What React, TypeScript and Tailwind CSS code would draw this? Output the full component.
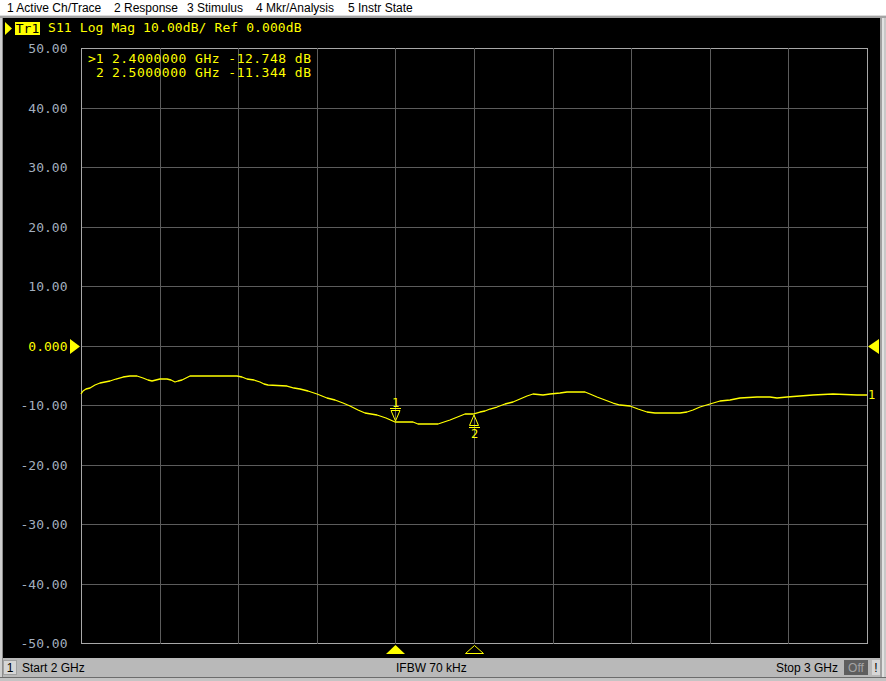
const MENU = [
  { label: "1 Active Ch/Trace", w: "w-[107px]" },
  { label: "2 Response", w: "w-[73px]" },
  { label: "3 Stimulus", w: "w-[69px]" },
  { label: "4 Mkr/Analysis", w: "w-[92px]" },
  { label: "5 Instr State", w: "w-auto" },
];

const Y_LABELS = ["50.00", "40.00", "30.00", "20.00", "10.00", "0.000", "-10.00", "-20.00", "-30.00", "-40.00", "-50.00"];

const TRACE: [number, number][] = [
  [81, 394], [83, 391], [86, 389], [90, 388], [95, 385], [100, 383], [105, 382], [110, 381],
  [116, 379], [123, 377], [130, 376], [137, 376], [140, 377], [143, 378], [148, 380], [152, 381],
  [156, 380], [160, 379], [167, 379], [171, 380], [175, 382], [178, 381], [182, 380], [186, 378],
  [190, 376], [237, 376], [242, 377], [247, 379], [254, 380], [260, 382], [264, 384], [268, 385],
  [287, 386], [294, 388], [300, 389], [308, 391], [317, 394], [322, 396], [327, 398], [335, 400],
  [343, 403], [350, 406], [358, 410], [365, 413], [377, 415], [386, 418], [395, 422], [405, 422],
  [413, 422], [418, 424], [438, 424], [444, 422], [450, 420], [455, 418], [460, 416], [465, 414],
  [473, 414], [480, 412], [485, 411], [490, 409], [497, 407], [505, 404], [513, 402], [520, 399],
  [527, 396], [533, 394], [543, 395], [550, 394], [560, 393], [567, 392], [585, 392], [590, 394],
  [597, 397], [605, 400], [613, 403], [620, 405], [630, 406], [638, 409], [647, 412], [655, 413],
  [680, 413], [687, 412], [693, 410], [700, 407], [710, 404], [720, 401], [730, 400], [740, 398],
  [757, 397], [770, 397], [777, 398], [787, 397], [800, 396], [813, 395], [833, 394], [857, 395],
  [867, 395],
];

const READOUT = [
  { idx: ">1", ix: 88, text: "2.4000000 GHz -12.748 dB", y: 63 },
  { idx: "2", ix: 96, text: "2.5000000 GHz -11.344 dB", y: 77 },
];

const MONO = "'DejaVu Sans Mono', 'Liberation Mono', monospace";
const YEL = "#ffff00";

// grid geometry in page pixels
const X0 = 81;
const X1 = 867;
const Y0 = 48;
const Y1 = 643;
const hLines = Array.from({ length: 11 }, (_, i) => Math.round(Y0 + i * 59.5) + 0.5);
const vLines = Array.from({ length: 11 }, (_, i) => Math.round(X0 + i * 78.6) + 0.5);

function Chart() {
  return (
    <svg width={877} height={620} viewBox="3 38 877 620" className="block" style={{ fontFamily: MONO }}>
      {hLines.map((y, i) => (
        <line
          key={"h" + i}
          x1={X0}
          x2={X1 + 1}
          y1={y}
          y2={y}
          stroke={i === 0 || i === 10 ? "#a8a8a8" : "#5c5c5c"}
          shapeRendering="crispEdges"
        />
      ))}
      {vLines.map((x, i) => (
        <line
          key={"v" + i}
          x1={x}
          x2={x}
          y1={Y0}
          y2={Y1 + 1}
          stroke={i === 0 || i === 10 ? "#a8a8a8" : "#5c5c5c"}
          shapeRendering="crispEdges"
        />
      ))}

      {Y_LABELS.map((l, i) => (
        <text
          key={l}
          x={67.5}
          y={hLines[i] + 4.5}
          textAnchor="end"
          fontSize={13}
          fill={l === "0.000" ? YEL : "#a3afbf"}
        >
          {l}
        </text>
      ))}

      {/* reference level arrows */}
      <polygon points="70,339 70,354 80,346.5" fill={YEL} />
      <polygon points="879,339 879,354 868,346.5" fill={YEL} />

      <polyline
        points={TRACE.map((p) => p.join(",")).join(" ")}
        fill="none"
        stroke={YEL}
        strokeWidth={1.3}
        strokeLinejoin="round"
      />

      {/* marker 1 */}
      <text x={395.5} y={407} textAnchor="middle" fontSize={12} fill={YEL}>1</text>
      <line x1={390} x2={401} y1={408.5} y2={408.5} stroke={YEL} />
      <polygon points="391,410.5 400,410.5 395.5,421" fill="none" stroke={YEL} />
      {/* marker 2 */}
      <polygon points="474,415 469.5,425.5 478.5,425.5" fill="none" stroke={YEL} />
      <line x1={469} x2={480} y1={427.5} y2={427.5} stroke={YEL} />
      <text x={474.5} y={438} textAnchor="middle" fontSize={12} fill={YEL}>2</text>

      <text x={868} y={399} fontSize={12} fill={YEL}>1</text>

      {/* marker readout */}
      <g fontSize={13} fill={YEL}>
        {READOUT.map((r) => (
          <g key={r.idx}>
            <text x={r.ix} y={r.y}>{r.idx}</text>
            <text x={112} y={r.y} textLength={199} lengthAdjust="spacing" xmlSpace="preserve">
              {r.text}
            </text>
          </g>
        ))}
      </g>

      {/* stimulus markers under the grid */}
      <polygon points="386,654 405,654 395.5,645" fill={YEL} />
      <polygon points="465.5,653.5 483.5,653.5 474.5,645.5" fill="none" stroke={YEL} />
    </svg>
  );
}

export default function App() {
  return (
    <div className="w-[886px] h-[681px] bg-[#c4c4c4] flex flex-col overflow-hidden" style={{ fontFamily: "'Liberation Sans', Arial, sans-serif" }}>
      <div className="h-[15px] bg-white flex items-center pl-[7px] text-[12px] text-black leading-none">
        {MENU.map((m) => (
          <span key={m.label} className={m.w + " whitespace-nowrap"}>
            {m.label}
          </span>
        ))}
      </div>
      <div className="h-[1px] bg-[#dcdcdc]" />
      <div className="h-[2px] bg-[#a4a4a4]" />

      <div className="flex flex-1">
        <div className="w-[3px] flex">
          <div className="w-[2px] bg-[#cfcfcf]" />
          <div className="w-[1px] bg-[#8c8c8c]" />
        </div>

        <div className="w-[877px] flex flex-col">
          <div className="bg-black flex flex-col">
            <div className="h-[20px] flex items-center">
              <svg width={7} height={13} viewBox="0 0 7 13" className="ml-[2px]">
                <polygon points="0,0 7,6.5 0,13" fill={YEL} />
              </svg>
              <div
                className="ml-[3px] w-[25px] h-[13px] bg-[#ffff00] text-black text-[13px] leading-[13px] flex items-center justify-center"
                style={{ fontFamily: MONO }}
              >
                Tr1
              </div>
              <span
                className="ml-[8px] text-[13px] text-[#ffff00] whitespace-pre tracking-[0.1px]"
                style={{ fontFamily: MONO }}
              >
                S11 Log Mag 10.00dB/ Ref 0.000dB
              </span>
            </div>
            <Chart />
          </div>

          <div className="h-[19px] bg-[#b9b9b9] flex items-center text-[12px] text-black">
            <div className="w-[14px] h-[15px] bg-[#d6d6d6] border border-[#a0a0a0] flex items-center justify-center leading-none">
              1
            </div>
            <div className="ml-[5px] w-[374px] whitespace-nowrap">Start 2 GHz</div>
            <div className="whitespace-nowrap">IFBW 70 kHz</div>
            <div className="flex-1" />
            <div className="whitespace-nowrap">Stop 3 GHz</div>
            <div className="ml-[6px] w-[24px] h-[15px] bg-[#5e5e5e] text-[#a4a4a4] flex items-center justify-center leading-none">
              Off
            </div>
            <div className="ml-[4px] w-[8px] h-[15px] bg-[#d6d6d6] flex items-center justify-center leading-none">
              !
            </div>
          </div>
        </div>

        <div className="w-[6px] flex">
          <div className="w-[2px] bg-[#a0a0a0]" />
          <div className="w-[2px] bg-[#e2e2e2]" />
          <div className="w-[2px] bg-[#c8c8c8]" />
        </div>
      </div>

      <div className="h-[1px] bg-[#6c6c6c]" />
      <div className="h-[3px] bg-[#c4c4c4]" />
    </div>
  );
}
